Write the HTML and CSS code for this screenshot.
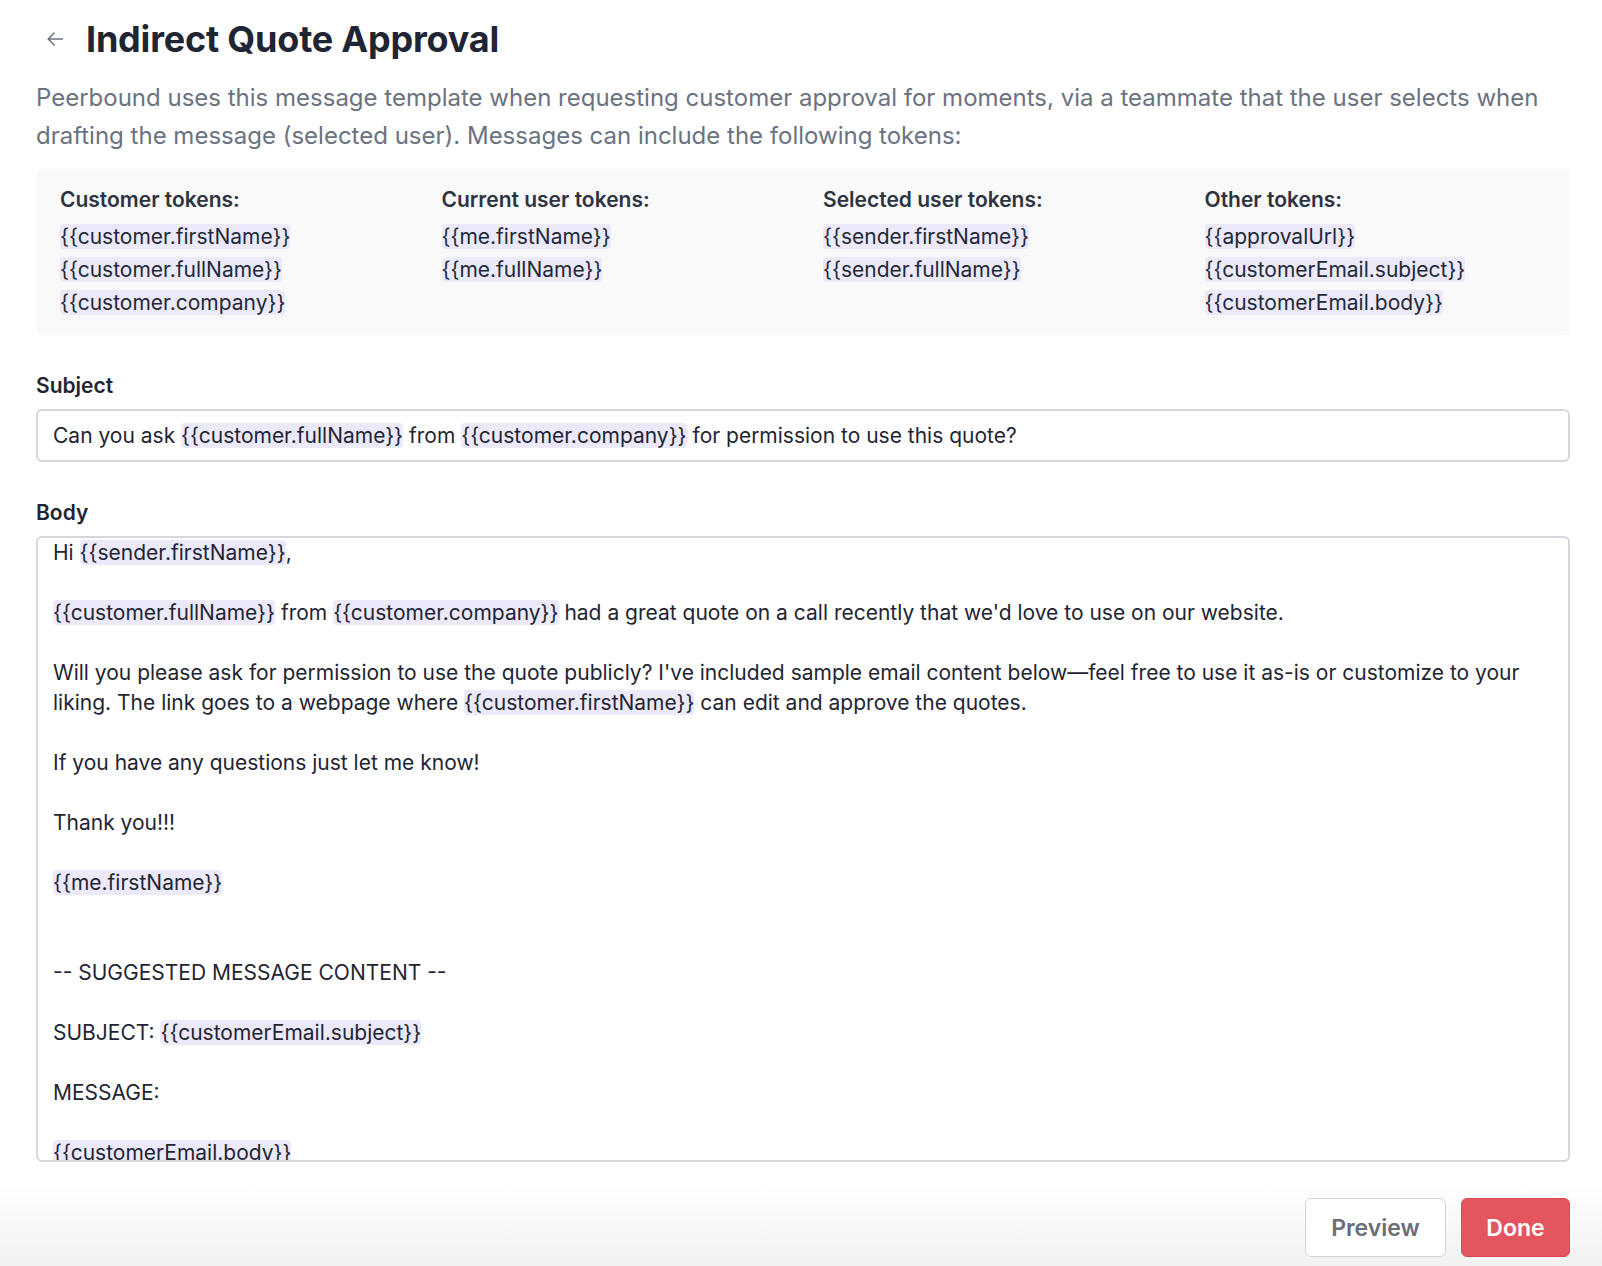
FILE: index.html
```html
<!DOCTYPE html>
<html lang="en">
<head>
  <meta charset="UTF-8">
  <title>Indirect Quote Approval</title>
  <link rel="stylesheet" href="styles.css">
</head>
<body>

<div class="page">
  <!-- header -->
  <div class="header">
    <span class="back">
      <svg width="20" height="20" viewBox="0 0 20 20" fill="none" stroke="#6b7280" stroke-width="1.6" stroke-linecap="round" stroke-linejoin="round">
        <path d="M17.5 10H3.5M9.2 4L3.2 10 9.2 16"/>
      </svg>
    </span>
    <h1>Indirect Quote Approval</h1>
  </div>

  <p class="intro">Peerbound uses this message template when requesting customer approval for moments, via a teammate that the user selects when drafting the message (selected user). Messages can include the following tokens:</p>

  <!-- token reference -->
  <div class="tokens">
    <div class="token-col">
      <div class="token-title">Customer tokens:</div>
      <div class="token-row"><span class="tok">{{customer.firstName}}</span></div>
      <div class="token-row"><span class="tok">{{customer.fullName}}</span></div>
      <div class="token-row"><span class="tok">{{customer.company}}</span></div>
    </div>
    <div class="token-col">
      <div class="token-title">Current user tokens:</div>
      <div class="token-row"><span class="tok">{{me.firstName}}</span></div>
      <div class="token-row"><span class="tok">{{me.fullName}}</span></div>
    </div>
    <div class="token-col">
      <div class="token-title">Selected user tokens:</div>
      <div class="token-row"><span class="tok">{{sender.firstName}}</span></div>
      <div class="token-row"><span class="tok">{{sender.fullName}}</span></div>
    </div>
    <div class="token-col">
      <div class="token-title">Other tokens:</div>
      <div class="token-row"><span class="tok">{{approvalUrl}}</span></div>
      <div class="token-row"><span class="tok">{{customerEmail.subject}}</span></div>
      <div class="token-row"><span class="tok">{{customerEmail.body}}</span></div>
    </div>
  </div>

  <label class="field-label">Subject</label>
  <div class="input subject">Can you ask <span class="tok">{{customer.fullName}}</span> from <span class="tok">{{customer.company}}</span> for permission to use this quote?</div>

  <label class="field-label">Body</label>
  <div class="input body-box">
    <div class="line">Hi <span class="tok">{{sender.firstName}}</span>,</div>
    <div class="line"></div>
    <div class="line"><span class="tok">{{customer.fullName}}</span> from <span class="tok">{{customer.company}}</span> had a great quote on a call recently that we'd love to use on our website.</div>
    <div class="line"></div>
    <div class="line">Will you please ask for permission to use the quote publicly? I've included sample email content below—feel free to use it as-is or customize to your liking. The link goes to a webpage where <span class="tok">{{customer.firstName}}</span> can edit and approve the quotes.</div>
    <div class="line"></div>
    <div class="line">If you have any questions just let me know!</div>
    <div class="line"></div>
    <div class="line">Thank you!!!</div>
    <div class="line"></div>
    <div class="line"><span class="tok">{{me.firstName}}</span></div>
    <div class="line"></div>
    <div class="line"></div>
    <div class="line">-- SUGGESTED MESSAGE CONTENT --</div>
    <div class="line"></div>
    <div class="line">SUBJECT: <span class="tok">{{customerEmail.subject}}</span></div>
    <div class="line"></div>
    <div class="line">MESSAGE:</div>
    <div class="line"></div>
    <div class="line"><span class="tok">{{customerEmail.body}}</span></div>
  </div>
</div>

<div class="footer">
  <button class="btn btn-secondary">Preview</button>
  <button class="btn btn-primary">Done</button>
</div>

</body>
</html>
```

FILE: styles.css
```css
body {
  font-family: 'Inter', 'Noto Sans', sans-serif;
  margin: 0;
  padding: 0;
  background: #fff;
  color: #1f2937;
}
.page {
  padding: 0 32px 0 36px;
}
.header {
  display: flex;
  align-items: center;
  gap: 21px;
  padding-top: 17px;
  padding-left: 9px;
}
.back {
  display: flex;
  width: 20px;
  height: 20px;
}
.header h1 {
  margin: 0;
  font-size: 36px;
  line-height: 44px;
  font-weight: 700;
  color: #1f2533;
  letter-spacing: -0.2px;
}
.intro {
  margin: 18px 0 0;
  font-size: 24px;
  line-height: 38px;
  color: #6b7280;
}
.tokens {
  margin-top: 14px;
  background: #f9f9fa;
  border-radius: 6px;
  padding: 17px 24px 16px;
  display: grid;
  grid-template-columns: repeat(4, 1fr);
  gap: 40px;
}
.token-title {
  font-size: 21px;
  line-height: 28px;
  font-weight: 600;
  color: #2d3340;
  margin-bottom: 6px;
}
.token-row {
  font-size: 21px;
  line-height: 33px;
}
.tok {
  background: #ebe9fa;
  border-radius: 4px;
}
.field-label {
  display: block;
  margin-top: 37px;
  font-size: 21px;
  line-height: 28px;
  font-weight: 600;
  color: #1f2533;
}
.input {
  margin-top: 9px;
  border: 2px solid #d6d6db;
  border-radius: 6px;
  background: #fff;
  font-size: 21px;
  color: #1f2533;
}
.subject {
  height: 49px;
  line-height: 49px;
  padding: 0 15px;
}
.body-box {
  height: 622px;
  overflow: hidden;
  padding: 0 15px;
}
.line {
  min-height: 30px;
  line-height: 30px;
}
.footer {
  display: flex;
  justify-content: flex-end;
  gap: 15px;
  padding: 36px 32px 9px 0;
  background: linear-gradient(to bottom, #ffffff 20%, #f1f1f1);
}
.btn {
  font-family: 'Inter', sans-serif;
  font-size: 23px;
  font-weight: 600;
  height: 59px;
  border-radius: 6px;
  cursor: pointer;
}
.btn-secondary {
  width: 141px;
  background: #fff;
  border: 1px solid #d4d4d8;
  color: #6b6e76;
}
.btn-primary {
  width: 109px;
  background: #e5555f;
  border: 1px solid #dc4a54;
  color: #fff;
}
```
